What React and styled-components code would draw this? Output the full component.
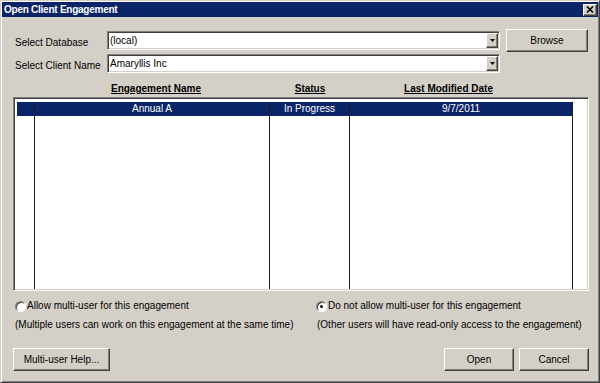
import React from "react";
import styled, { createGlobalStyle, css } from "styled-components";

const FACE = "#d4d0c8";
const NAVY = "#0a246a";

const GlobalStyle = createGlobalStyle`
  html, body { margin: 0; padding: 0; background: ${FACE}; }
  body { font-family: "Liberation Sans", Arial, sans-serif; font-size: 10px; color: #000; }
  * { box-sizing: border-box; }
`;

const raised = css`
  border: 1px solid;
  border-color: #fff #404040 #404040 #fff;
  box-shadow: inset -1px -1px #808080, inset 1px 1px ${FACE};
  background: ${FACE};
`;

const sunken = css`
  border: 1px solid;
  border-color: #808080 #fff #fff #808080;
  box-shadow: inset 1px 1px #404040, inset -1px -1px ${FACE};
`;

const Window = styled.div`
  width: 600px;
  height: 383px;
  border: 1px solid;
  border-color: ${FACE} #404040 #404040 ${FACE};
  box-shadow: inset 1px 1px #fff, inset -1px -1px #808080;
  padding: 1px;
  background: ${FACE};
  display: flex;
  flex-direction: column;
`;

const TitleBar = styled.div`
  height: 15px;
  background: ${NAVY};
  display: flex;
  align-items: center;
  justify-content: space-between;
  padding: 0 1px 0 2px;
`;

const Title = styled.span`
  color: #fff;
  font-weight: bold;
  font-size: 10px;
  letter-spacing: -0.25px;
  line-height: 15px;
`;

const CloseButton = styled.button`
  ${raised};
  width: 14px;
  height: 12px;
  padding: 0;
  display: grid;
  place-items: center;
`;

const Content = styled.div`
  flex: 1;
  display: flex;
  flex-direction: column;
  padding: 12px 9px 0 11px;
`;

const TopSection = styled.div`
  display: flex;
  align-items: flex-start;
`;

const FormCol = styled.div`
  margin-top: 2px;
  display: flex;
  flex-direction: column;
  gap: 4px;
`;

const FieldRow = styled.div`
  display: flex;
  align-items: flex-start;
`;

const Label = styled.label`
  width: 94px;
  padding-left: 2px;
  margin-top: 5px;
  line-height: 14px;
  white-space: nowrap;
`;

const Combo = styled.div`
  ${sunken};
  width: 393px;
  height: 19px;
  background: #fff;
  display: flex;
  align-items: center;
  padding: 1px 1px 1px 2px;
`;

const ComboText = styled.span`
  flex: 1;
  line-height: 15px;
  white-space: nowrap;
`;

const DropButton = styled.span`
  ${raised};
  width: 12px;
  height: 15px;
  display: grid;
  place-items: center;
`;

const PushButton = styled.button`
  ${raised};
  width: ${(p) => p.$w}px;
  height: 23px;
  padding: 0;
  font-family: "Liberation Sans", Arial, sans-serif;
  font-size: 10px;
  color: #000;
  white-space: nowrap;
`;

const BrowseButton = styled(PushButton)`
  margin-left: 6px;
`;

const HeaderRow = styled.div`
  margin-top: 10px;
  height: 14px;
  padding-left: 22px;
  display: grid;
  grid-template-columns: 242px 66px 211px;
`;

const HeaderCell = styled.span`
  text-align: center;
  font-weight: bold;
  text-decoration: underline;
  line-height: 12px;
  white-space: nowrap;
`;

const GridFrame = styled.div`
  ${sunken};
  width: 576px;
  height: 194px;
  background: #fff;
  padding: 4px 0 1px 3px;
`;

const Sheet = styled.div`
  width: 556px;
  height: 100%;
  display: grid;
  grid-template-columns: 18px 235px 80px 223px;
  grid-template-rows: 14px 1fr;
`;

const Cell = styled.div`
  border-right: 1px solid #1c1c1c;
  background: ${(p) => (p.$selected ? NAVY : "#fff")};
  color: ${(p) => (p.$selected ? "#fff" : "#000")};
  text-align: center;
  line-height: 14px;
  white-space: nowrap;
  overflow: hidden;
`;

const OptionGroup = styled.div`
  margin-top: 8px;
  padding-left: 2px;
  display: grid;
  grid-template-columns: 301px 1fr;
`;

const OptionCol = styled.div`
  display: flex;
  flex-direction: column;
  gap: 5px;
`;

const OptionLine = styled.div`
  display: flex;
  align-items: center;
  gap: 1px;
  line-height: 14px;
  white-space: nowrap;
`;

const Note = styled.div`
  line-height: 14px;
  white-space: nowrap;
  padding-left: ${(p) => p.$indent || 0}px;
`;

const Radio = styled.span`
  width: 11px;
  height: 11px;
  border-radius: 50%;
  background: #fff;
  border: 1px solid;
  border-color: #808080 #fff #fff #808080;
  box-shadow: inset 1px 1px #404040;
  display: grid;
  place-items: center;
  flex: none;
  &::after {
    content: "";
    width: 3px;
    height: 3px;
    border-radius: 50%;
    background: ${(p) => (p.$checked ? "#000" : "transparent")};
  }
`;

const ButtonRow = styled.div`
  margin-top: 16px;
  display: flex;
  justify-content: space-between;
`;

const ButtonGroup = styled.div`
  display: flex;
  gap: 5px;
`;

const Arrow = () => (
  <svg width="5" height="3" viewBox="0 0 5 3">
    <polygon points="0,0 5,0 2.5,3" fill="#000" />
  </svg>
);

const CloseGlyph = () => (
  <svg width="8" height="7" viewBox="0 0 8 7">
    <path d="M1 0.5 L7 6.5 M7 0.5 L1 6.5" stroke="#000" strokeWidth="1.6" />
  </svg>
);

const rows = [{ name: "Annual A", status: "In Progress", date: "9/7/2011" }];

export default function App() {
  return (
    <>
      <GlobalStyle />
      <Window>
        <TitleBar>
          <Title>Open Client Engagement</Title>
          <CloseButton aria-label="Close">
            <CloseGlyph />
          </CloseButton>
        </TitleBar>
        <Content>
          <TopSection>
            <FormCol>
              <FieldRow>
                <Label>Select Database</Label>
                <Combo>
                  <ComboText>(local)</ComboText>
                  <DropButton>
                    <Arrow />
                  </DropButton>
                </Combo>
              </FieldRow>
              <FieldRow>
                <Label>Select Client Name</Label>
                <Combo>
                  <ComboText>Amaryllis Inc</ComboText>
                  <DropButton>
                    <Arrow />
                  </DropButton>
                </Combo>
              </FieldRow>
            </FormCol>
            <BrowseButton $w={82}>Browse</BrowseButton>
          </TopSection>

          <HeaderRow>
            <HeaderCell>Engagement Name</HeaderCell>
            <HeaderCell>Status</HeaderCell>
            <HeaderCell>Last Modified Date</HeaderCell>
          </HeaderRow>

          <GridFrame>
            <Sheet>
              {rows.map((r) => (
                <React.Fragment key={r.name}>
                  <Cell $selected />
                  <Cell $selected>{r.name}</Cell>
                  <Cell $selected>{r.status}</Cell>
                  <Cell $selected>{r.date}</Cell>
                </React.Fragment>
              ))}
              <Cell />
              <Cell />
              <Cell />
              <Cell />
            </Sheet>
          </GridFrame>

          <OptionGroup>
            <OptionCol>
              <OptionLine>
                <Radio />
                <span>Allow multi-user for this engagement</span>
              </OptionLine>
              <Note>(Multiple users can work on this engagement at the same time)</Note>
            </OptionCol>
            <OptionCol>
              <OptionLine>
                <Radio $checked />
                <span>Do not allow multi-user for this engagement</span>
              </OptionLine>
              <Note $indent={1}>(Other users will have read-only access to the engagement)</Note>
            </OptionCol>
          </OptionGroup>

          <ButtonRow>
            <PushButton $w={97}>Multi-user Help...</PushButton>
            <ButtonGroup>
              <PushButton $w={70}>Open</PushButton>
              <PushButton $w={70}>Cancel</PushButton>
            </ButtonGroup>
          </ButtonRow>
        </Content>
      </Window>
    </>
  );
}
